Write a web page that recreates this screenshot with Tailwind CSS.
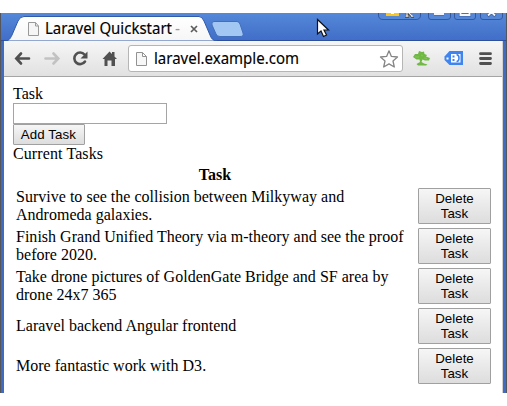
<!DOCTYPE html>
<html lang="en">
<head>
<meta charset="utf-8">
<title>Laravel Quickstart - Basic</title>
<script src="https://cdn.jsdelivr.net/npm/@tailwindcss/browser@4"></script>
</head>
<body class="bg-white w-[507px] h-[406px] overflow-hidden pt-[13px] text-black">
<div class="relative w-[507px] h-[380px] overflow-hidden bg-[#3f6bc3] border-l border-r border-[#55565c] flex flex-col">
  <!-- Tab strip -->
  <header class="relative h-[28px] shrink-0 bg-linear-to-b from-[#5488d8] to-[#416dc8]">
    <svg class="absolute left-0 top-0" width="505" height="28" viewBox="1 13 505 28">
      <defs>
        <linearGradient id="tab" x1="0" y1="0" x2="0" y2="1"><stop offset="0" stop-color="#fff"/><stop offset="1" stop-color="#f6f6f6"/></linearGradient>
      </defs>
      <path d="M0 40.500H506" stroke="#2c509c"/>
      <path d="M4 41C9 41 10 39 12 35L18 21Q20 16.500 24 16.500H199Q202 16.500 204 21L210 35Q212 41 217 41Z" fill="url(#tab)" stroke="#315aa9"/>
      <path d="M214 21.500H237Q239 21.500 240 24L243 33Q244 36.500 240 36.500H220Q217 36.500 216 34L212 25Q211 21.500 214 21.500Z" fill="#a3c7f3" stroke="#416fb9"/>
      <path d="M28.500 22.500H35.500L38.500 26V35.500H28.500ZM35.500 22.500V26H38.500" fill="#f5f5f5" stroke="#999"/>
      <path d="M191 26L197 32M197 26L191 32" stroke="#5c5c5c" stroke-width="1.700"/>
      <g fill="#5587d6" stroke="#34589d">
        <path d="M378.500 12V15Q378.500 19.500 383 19.500H416Q420.500 19.500 420.500 15V12M428.500 12V17Q428.500 19.500 431 19.500H447Q450.500 19.500 450.500 17V12M454.500 12V17Q454.500 19.500 457 19.500H473Q475.500 19.500 475.500 17V12M480.500 12V17Q480.500 19.500 483 19.500H499Q502.500 19.500 502.500 17V12"/>
      </g>
      <path d="M386 12H399V16H386Z" fill="#fac51e"/><path d="M391 12H394V14H391Z" fill="#fff"/>
      <path d="M407 12V17.200M412.500 17L408.500 13M405 16.500H409M411 16.500H414" stroke="#444" stroke-width="2.400"/>
      <path d="M407 12V16.500M412.500 16.500L408.500 12.500M405.500 16.200H408.500M411 16.200H413.500" stroke="#eee" stroke-width="1.200"/>
      <path d="M434 14H444M460.500 12V15H469.500V12M487.500 16L491.500 12L495.500 16" fill="none" stroke="#3c5f9f" stroke-width="3.200"/>
      <path d="M434 14H444M460.500 12V15H469.500V12M488 15.500L491.500 12L495 15.500" fill="none" stroke="#f4f6fb" stroke-width="1.900"/>
    </svg>
    <div class="absolute left-[44px] top-[4px]"><svg class="block font-['Noto_Sans','Open_Sans',sans-serif] text-[15.500px]" width="136" height="22"><text x="0" y="17" textLength="127" lengthAdjust="spacingAndGlyphs" stroke="#000" stroke-width=".15">Laravel Quickstart</text><text x="130" y="17" fill="#999">-</text></svg></div>
  </header>

  <main class="ml-[3px] w-[499px] grow bg-white border-r border-[#d2d2d2] flex flex-col">
    <!-- Toolbar -->
    <nav class="h-[36px] shrink-0 flex items-start bg-linear-to-b from-[#f6f6f6] to-[#e1e1e1] border-b border-[#a5a5a5]">
      <svg class="shrink-0" width="124" height="35" viewBox="4 41 124 35" fill="none" stroke-linecap="round">
        <path d="M29 58.500H17M21 53.500L16.300 58.500L21 63.500" stroke="#505050" stroke-width="2.600"/>
        <path d="M45.500 58.500H57M53.500 53.500L58.300 58.500L53.500 63.500" stroke="#c2c2c2" stroke-width="2.600"/>
        <path d="M84.500 54.500A5.800 5.800 0 1 0 85 61.500" stroke="#505050" stroke-width="2.600"/>
        <path d="M87.500 51.500V58.500H80.500Z" fill="#505050"/>
        <path d="M102.500 59L109.500 51.500L112 54V52H114.500V56.500L117 59H115V66H111.500V60.500H107.500V66H104.500V59Z" fill="#505050"/>
      </svg>
      <div class="mt-[4px] w-[275px] h-[27px] shrink-0 rounded-[3px] border border-[#b5b5b5] bg-white flex items-center">
        <svg class="ml-[7px] shrink-0" width="11" height="16" viewBox="0 0 11 16"><path d="M.5 1.500H6.500L10.500 5.500V14.500H.5ZM6.500 1.500V5.500H10.500" fill="#f7f7f7" stroke="#929292"/></svg>
        <svg class="ml-[7px] shrink-0 font-['Noto_Sans','Open_Sans',sans-serif] text-[16.500px]" width="150" height="25"><text x="0" y="18" textLength="145" lengthAdjust="spacingAndGlyphs" stroke="#000" stroke-width=".15">laravel.example.com</text></svg>
        <svg class="ml-auto mr-[3px] shrink-0" width="20" height="20" viewBox="0 0 20 20"><path d="M10 1.800L12.400 7.400L18.500 8L14 12L15.300 18L10 14.900L4.700 18L6 12L1.500 8L7.600 7.400Z" fill="#fff" stroke="#858585" stroke-width="1.300" stroke-linejoin="round"/></svg>
      </div>
      <svg class="shrink-0" width="99" height="35" viewBox="403 41 99 35">
        <path d="M413 57L415 54H418L419 51L422 52L424 51.500L424.500 54L427 55L426 56.500L430 58L429 60.500L425 60.500L422.500 59.500L421.500 62L424 63.500L427.500 64.500L426 65.500H418L416.500 64L420 62L419.500 59.500L416.500 59.500Z" fill="#70b944"/>
        <path d="M415 57H419M421 55L423 56M424 58L427 58.500" stroke="#8aca60" stroke-width=".8"/>
        <path d="M449.500 51H463V65H449.500L444.500 60V56.500Z" fill="#3f84ef"/>
        <path d="M446.500 57.500H448.500V59.500H446.500ZM451 54H460.500V62.500H451Z" fill="#fff"/>
        <path d="M452.500 55.500H454.500V57.500H452.500ZM452.500 59H454.500V61H452.500Z" fill="#3f84ef"/>
        <path d="M456.500 54.500Q459 55 459 58Q459 61.500 456.500 61.500" fill="none" stroke="#3f84ef" stroke-width="1.500"/>
        <path d="M480.500 53.700H490.500M480.500 58.500H490.500M480.500 63.500H490.500" stroke="#505050" stroke-width="2.800" stroke-linecap="round"/>
      </svg>
    </nav>

    <!-- Page -->
    <div class="pl-[9px] pt-[8px] font-['Liberation_Serif',serif] text-[16px] leading-[18px]">
      <label for="task" class="block h-[18px]">Task</label>
      <input id="task" class="block w-[154px] h-[21px] border border-[#a5a5a5] bg-white outline-none">
      <button class="block w-[72px] h-[21px] pr-px border border-[#a0a0a0] rounded-[1px] bg-linear-to-b from-[#f6f6f6] to-[#dddddd] font-['Liberation_Sans',sans-serif] text-[13.3px] tracking-[0.1px] leading-[18px] whitespace-nowrap">Add Task</button>
      <div class="h-[18px] tracking-[0.1px]">Current Tasks</div>
      <table class="w-[481px] table-fixed border-separate border-spacing-[2px]">
        <colgroup><col class="w-[400px]"><col class="w-[75px]"></colgroup>
        <thead><tr><th class="p-px h-[20px] font-bold text-center">Task</th><td></td></tr></thead>
        <tbody class="tracking-[0.015px]">
          <tr><td class="p-px align-middle">Survive to see the collision between Milkyway and<br>Andromeda galaxies.</td><td class="p-px"><button class="block w-[73px] h-[36px] border border-[#a0a0a0] rounded-[1px] bg-linear-to-b from-[#f6f6f6] to-[#dddddd] font-['Liberation_Sans',sans-serif] text-[13.3px] leading-[15px]">Delete<br>Task</button></td></tr>
          <tr><td class="p-px align-middle">Finish Grand Unified Theory via m-theory and see the proof<br>before 2020.</td><td class="p-px"><button class="block w-[73px] h-[36px] border border-[#a0a0a0] rounded-[1px] bg-linear-to-b from-[#f6f6f6] to-[#dddddd] font-['Liberation_Sans',sans-serif] text-[13.3px] leading-[15px]">Delete<br>Task</button></td></tr>
          <tr><td class="p-px align-middle">Take drone pictures of GoldenGate Bridge and SF area by<br>drone 24x7 365</td><td class="p-px"><button class="block w-[73px] h-[36px] border border-[#a0a0a0] rounded-[1px] bg-linear-to-b from-[#f6f6f6] to-[#dddddd] font-['Liberation_Sans',sans-serif] text-[13.3px] leading-[15px]">Delete<br>Task</button></td></tr>
          <tr><td class="p-px align-middle">Laravel backend Angular frontend</td><td class="p-px"><button class="block w-[73px] h-[36px] border border-[#a0a0a0] rounded-[1px] bg-linear-to-b from-[#f6f6f6] to-[#dddddd] font-['Liberation_Sans',sans-serif] text-[13.3px] leading-[15px]">Delete<br>Task</button></td></tr>
          <tr><td class="p-px align-middle">More fantastic work with D3.</td><td class="p-px"><button class="block w-[73px] h-[36px] border border-[#a0a0a0] rounded-[1px] bg-linear-to-b from-[#f6f6f6] to-[#dddddd] font-['Liberation_Sans',sans-serif] text-[13.3px] leading-[15px]">Delete<br>Task</button></td></tr>
        </tbody>
      </table>
    </div>
  </main>
  <!-- Mouse pointer -->
  <svg class="absolute left-[315px] top-[5px]" width="16" height="21" viewBox="0 0 16 21"><path d="M1.500 1.500V16L5 13L7.500 18.500L10.500 17L8 12H12.500Z" fill="#fff" stroke="#111" stroke-width="1.200"/></svg>
</div>
</body>
</html>
